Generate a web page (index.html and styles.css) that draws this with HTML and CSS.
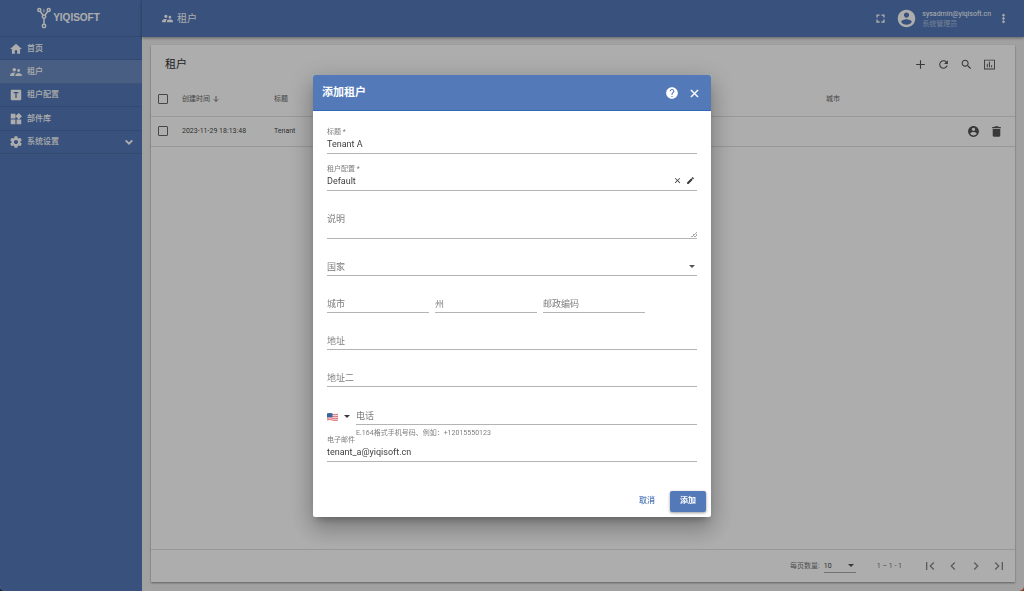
FILE: index.html
```html
<!DOCTYPE html>
<html lang="zh-CN">
<head>
<meta charset="utf-8">
<meta name="viewport" content="width=device-width, initial-scale=1">
<title>租户</title>
<link rel="stylesheet" href="styles.css">
</head>
<body>
<div class="app">
  <aside class="sidebar">
    <div class="brand">
      <svg class="brand-mark" viewBox="0 0 14 22" aria-hidden="true"><g fill="none" stroke="currentColor" stroke-width="1.5"><circle cx="2.3" cy="3" r="1.500"/><circle cx="11.7" cy="3" r="1.500"/><circle cx="7" cy="9.6" r="1.700"/><circle cx="7" cy="19" r="1.700"/><path d="M3.2 4.300 6 8.300M10.800 4.300 8 8.300M7 11.300v6"/><path d="M6.900 2.200v3.200" stroke-width="1"/></g></svg>
      <span>YIQISOFT</span>
    </div>
    <nav class="nav">
      <a href="#home"><svg viewBox="0 0 24 24" aria-hidden="true"><path d="M10 20v-6h4v6h5v-8h3L12 3 2 12h3v8z"/></svg><span>首页</span></a>
      <a href="#tenants" class="active"><svg viewBox="0 0 24 24" aria-hidden="true"><path d="M16.5 12c1.38 0 2.49-1.12 2.49-2.5S17.88 7 16.5 7 14 8.12 14 9.5s1.12 2.5 2.5 2.5zM9 11c1.66 0 2.99-1.34 2.99-3S10.66 5 9 5 6 6.34 6 8s1.34 3 3 3zm7.5 3c-1.83 0-5.5.92-5.5 2.75V19h11v-2.25c0-1.83-3.67-2.75-5.5-2.75zM9 13c-2.33 0-7 1.17-7 3.5V19h7v-2.25c0-.85.33-2.34 2.37-3.47C10.5 13.1 9.66 13 9 13z"/></svg><span>租户</span></a>
      <a href="#profiles"><svg viewBox="0 0 24 24" aria-hidden="true"><path fill-rule="evenodd" d="M5 3h14a2 2 0 0 1 2 2v14a2 2 0 0 1-2 2H5a2 2 0 0 1-2-2V5c0-1.100.9-2 2-2zm3 4v2.200h2.900V17h2.200V9.200H16V7z"/></svg><span>租户配置</span></a>
      <a href="#widgets"><svg viewBox="0 0 24 24" aria-hidden="true"><path d="M13 13v8h8v-8h-8zM3 21h8v-8H3v8zM3 3v8h8V3H3zm13.660-1.310L11 7.340 16.660 13l5.660-5.660-5.660-5.650z"/></svg><span>部件库</span></a>
      <a href="#settings"><svg viewBox="0 0 24 24" aria-hidden="true"><path d="M19.430 12.980c.04-.32.07-.64.07-.98s-.03-.66-.07-.98l2.110-1.650c.19-.15.24-.42.12-.64l-2-3.460c-.12-.22-.39-.3-.61-.22l-2.490 1c-.52-.4-1.080-.73-1.690-.98l-.38-2.650C14.460 2.180 14.250 2 14 2h-4c-.25 0-.46.18-.49.42l-.38 2.650c-.61.25-1.170.59-1.690.98l-2.490-1c-.23-.09-.49 0-.61.22l-2 3.460c-.13.22-.07.49.12.64l2.110 1.650c-.04.32-.07.65-.07.98s.03.66.07.98l-2.110 1.650c-.19.15-.24.42-.12.64l2 3.460c.12.22.39.3.61.22l2.490-1c.52.4 1.080.73 1.690.98l.38 2.650c.03.24.24.42.49.42h4c.25 0 .46-.18.49-.42l.38-2.650c.61-.25 1.170-.59 1.690-.98l2.490 1c.23.09.49 0 .61-.22l2-3.460c.12-.22.07-.49-.12-.64l-2.110-1.650zM12 15.500c-1.930 0-3.500-1.570-3.500-3.500s1.570-3.500 3.500-3.500 3.500 1.570 3.500 3.500-1.570 3.500-3.500 3.500z"/></svg><span>系统设置</span><svg class="chevron" viewBox="0 0 24 24" aria-hidden="true"><path d="m4 8 8 8 8-8" fill="none" stroke="currentColor" stroke-width="4.500"/></svg></a>
    </nav>
  </aside>

  <div class="workspace">
    <header class="topbar">
      <div class="crumb"><svg viewBox="0 0 24 24" aria-hidden="true"><path d="M16.5 12c1.38 0 2.49-1.12 2.49-2.5S17.88 7 16.5 7 14 8.12 14 9.5s1.12 2.5 2.5 2.5zM9 11c1.66 0 2.99-1.34 2.99-3S10.66 5 9 5 6 6.34 6 8s1.34 3 3 3zm7.5 3c-1.83 0-5.5.92-5.5 2.75V19h11v-2.25c0-1.83-3.67-2.75-5.5-2.75zM9 13c-2.33 0-7 1.17-7 3.5V19h7v-2.25c0-.85.33-2.34 2.37-3.47C10.5 13.1 9.66 13 9 13z"/></svg><span>租户</span></div>
      <button class="icon-btn fullscreen" type="button" aria-label="全屏"><svg viewBox="0 0 24 24"><path d="M5 14H3v7h7v-3H6v-4zM3 10h3V6h4V3H3zm15 8h-4v3h7v-7h-3zM14 3v3h4v4h3V3z"/></svg></button>
      <div class="user">
        <svg viewBox="0 0 24 24" aria-hidden="true"><path d="M12 2C6.480 2 2 6.480 2 12s4.480 10 10 10 10-4.480 10-10S17.520 2 12 2zm0 3c1.660 0 3 1.340 3 3s-1.340 3-3 3-3-1.340-3-3 1.340-3 3-3zm0 14.200c-2.500 0-4.710-1.280-6-3.220.03-1.990 4-3.080 6-3.080 1.990 0 5.970 1.090 6 3.080-1.290 1.940-3.500 3.220-6 3.220z"/></svg>
        <div><div>sysadmin@yiqisoft.cn</div><div class="role">系统管理员</div></div>
      </div>
      <button class="icon-btn more" type="button" aria-label="更多"><svg viewBox="0 0 24 24"><path d="M12 8c1.100 0 2-.9 2-2s-.9-2-2-2-2 .9-2 2 .9 2 2 2zm0 2c-1.100 0-2 .9-2 2s.9 2 2 2 2-.9 2-2-.9-2-2-2zm0 6c-1.100 0-2 .9-2 2s.9 2 2 2 2-.9 2-2-.9-2-2-2z" stroke="currentColor"/></svg></button>
    </header>

    <main class="content">
      <section class="card">
        <div class="card-head">
          <h1>租户</h1>
          <button class="icon-btn" type="button" aria-label="添加租户"><svg viewBox="0 0 24 24"><path d="M20 13h-7v7h-2v-7H4v-2h7V4h2v7h7z"/></svg></button>
          <button class="icon-btn" type="button" aria-label="刷新"><svg viewBox="0 0 24 24"><path d="M17.650 6.350C16.200 4.900 14.210 4 12 4c-4.420 0-7.990 3.580-7.990 8s3.570 8 7.990 8c3.730 0 6.840-2.550 7.730-6h-2.080c-.82 2.330-3.040 4-5.650 4-3.310 0-6-2.690-6-6s2.690-6 6-6c1.660 0 3.140.69 4.220 1.780L13 11h7V4l-2.350 2.350z"/></svg></button>
          <button class="icon-btn" type="button" aria-label="搜索"><svg viewBox="0 0 24 24"><path d="M15.500 14h-.79l-.28-.27C15.410 12.590 16 11.110 16 9.500 16 5.910 13.090 3 9.500 3S3 5.910 3 9.500 5.910 16 9.500 16c1.610 0 3.090-.59 4.230-1.570l.27.28v.79l5 4.990L20.490 19l-4.990-5zm-6 0C7.010 14 5 11.990 5 9.500S7.010 5 9.500 5 14 7.010 14 9.500 11.990 14 9.500 14z"/></svg></button>
          <button class="icon-btn" type="button" aria-label="统计"><svg viewBox="0 0 24 24"><path d="M2 3v18h20V3zm18.300 16.300H3.700V4.700h16.600zM7 10.500h1.800V17H7zM11 7h1.800v10H11zm4 6.500h1.800V17H15z"/></svg></button>
        </div>
        <table>
          <colgroup><col class="c-check"><col class="c-time"><col><col class="c-city"><col class="c-actions"></colgroup>
          <thead>
            <tr><th><input type="checkbox" aria-label="全选"></th><th><span class="sort">创建时间 <svg viewBox="0 0 24 24" aria-hidden="true"><path d="M12 3v16M5 12.500l7 7 7-7" fill="none" stroke="currentColor" stroke-width="2.600"/></svg></span></th><th>标题</th><th>城市</th><th></th></tr>
          </thead>
          <tbody>
            <tr><td><input type="checkbox" aria-label="选择 Tenant"></td><td>2023-11-29 18:13:48</td><td>Tenant</td><td></td><td><div class="row-actions">
              <button class="icon-btn" type="button" aria-label="管理租户管理员"><svg viewBox="0 0 24 24"><path d="M12 2C6.480 2 2 6.480 2 12s4.480 10 10 10 10-4.480 10-10S17.520 2 12 2zm0 3c1.660 0 3 1.340 3 3s-1.340 3-3 3-3-1.340-3-3 1.340-3 3-3zm0 14.200c-2.500 0-4.710-1.280-6-3.220.03-1.990 4-3.080 6-3.080 1.990 0 5.970 1.090 6 3.080-1.290 1.940-3.500 3.220-6 3.220z"/></svg></button>
              <button class="icon-btn" type="button" aria-label="删除"><svg viewBox="0 0 24 24"><path d="M5 19.500c0 1.100.9 2 2 2h10c1.100 0 2-.9 2-2V7.500H5zM20 3.500h-4l-1-1H9l-1 1H4v2.300h16z"/></svg></button>
            </div></td></tr>
          </tbody>
        </table>
        <footer class="pager">
          <label for="page-size">每页数量:</label>
          <div class="select page-size"><select id="page-size"><option>10</option></select><svg viewBox="0 0 10 5" aria-hidden="true"><path d="M0 0h10L5 5z"/></svg></div>
          <span class="range">1 – 1 - 1</span>
          <div class="pages">
            <button class="icon-btn" type="button" aria-label="首页"><svg viewBox="0 0 24 24"><path d="M18.400 16.600 13.800 12l4.600-4.600L17 6l-6 6 6 6zM6 6h2v12H6z"/></svg></button>
            <button class="icon-btn" type="button" aria-label="上一页"><svg viewBox="0 0 24 24"><path d="M15.400 7.400 14 6l-6 6 6 6 1.400-1.400L10.800 12z"/></svg></button>
            <button class="icon-btn" type="button" aria-label="下一页"><svg viewBox="0 0 24 24"><path d="M10 6 8.600 7.400l4.600 4.600-4.600 4.600L10 18l6-6z"/></svg></button>
            <button class="icon-btn" type="button" aria-label="末页"><svg viewBox="0 0 24 24"><path d="m5.600 7.400 4.600 4.600-4.600 4.600L7 18l6-6-6-6zM16 6h2v12h-2z"/></svg></button>
          </div>
        </footer>
      </section>
    </main>
  </div>
</div>

<div class="backdrop">
  <form class="dialog" role="dialog" aria-modal="true" aria-labelledby="dialog-title">
    <header class="dialog-head">
      <h2 id="dialog-title">添加租户</h2>
      <button class="icon-btn help" type="button" aria-label="帮助"><svg viewBox="0 0 24 24"><path d="M12 2C6.480 2 2 6.480 2 12s4.480 10 10 10 10-4.480 10-10S17.520 2 12 2zm1 17h-2v-2h2v2zm2.070-7.750-.9.920C13.450 12.900 13 13.500 13 15h-2v-.5c0-1.100.45-2.100 1.170-2.830l1.240-1.260c.37-.36.59-.86.59-1.410 0-1.100-.9-2-2-2s-2 .9-2 2H8c0-2.210 1.790-4 4-4s4 1.790 4 4c0 .88-.36 1.680-.93 2.250z"/></svg></button>
      <button class="icon-btn" type="button" aria-label="关闭"><svg viewBox="0 0 24 24"><path d="M19 6.410 17.590 5 12 10.590 6.410 5 5 6.410 10.590 12 5 17.590 6.410 19 12 13.410 17.590 19 19 17.590 13.410 12z" stroke="currentColor" stroke-width=".8"/></svg></button>
    </header>
    <div class="fields">
      <div class="field filled"><label for="title">标题 *</label><input id="title" type="text" value="Tenant A"></div>
      <div class="field filled"><label for="profile">租户配置 *</label>
        <div class="with-tools"><input id="profile" type="text" value="Default">
          <button class="icon-btn" type="button" aria-label="清除"><svg viewBox="0 0 24 24"><path d="M19 6.410 17.590 5 12 10.590 6.410 5 5 6.410 10.590 12 5 17.590 6.410 19 12 13.410 17.590 19 19 17.590 13.410 12z"/></svg></button>
          <button class="icon-btn" type="button" aria-label="编辑"><svg viewBox="0 0 24 24"><path d="M3 17.250V21h3.750L17.810 9.940l-3.750-3.750L3 17.250zM20.710 7.040c.39-.39.39-1.020 0-1.410l-2.340-2.340c-.39-.39-1.020-.39-1.410 0l-1.830 1.830 3.750 3.750 1.830-1.830z"/></svg></button>
        </div>
      </div>
      <div class="field empty tall"><textarea id="desc" rows="2"></textarea><label for="desc">说明</label></div>
      <div class="field empty select"><select id="country"><option value=""></option></select><label for="country">国家</label><svg viewBox="0 0 10 5" aria-hidden="true"><path d="M0 0h10L5 5z"/></svg></div>
      <div class="split">
        <div class="field empty"><input id="city" type="text"><label for="city">城市</label></div>
        <div class="field empty"><input id="state" type="text"><label for="state">州</label></div>
        <div class="field empty"><input id="zip" type="text"><label for="zip">邮政编码</label></div>
      </div>
      <div class="field empty"><input id="addr1" type="text"><label for="addr1">地址</label></div>
      <div class="field empty"><input id="addr2" type="text"><label for="addr2">地址二</label></div>
      <div class="phone">
        <button class="flag" type="button" aria-label="国家区号：美国">
          <svg class="us" viewBox="0 0 22 16" aria-hidden="true"><path fill="#f4e4e6" d="M0 1q6-2 11 0t11 0v14q-6 2-11 0T0 15z"/><path d="M0 2.500q6-2 11 0t11 0M0 6.500q6-2 11 0t11 0M0 10.500q6-2 11 0t11 0M0 14q6-2 11 0t11 0" fill="none" stroke="#dc6067" stroke-width="1.800"/><path fill="#34659f" d="M0 1q6-2 11 0v8q-5-2-11 0z"/></svg>
          <svg class="caret" viewBox="0 0 10 5" aria-hidden="true"><path d="M0 0h10L5 5z"/></svg>
        </button>
        <div class="phone-main">
          <div class="field empty"><input id="phone" type="tel" aria-describedby="phone-hint"><label for="phone">电话</label></div>
          <div class="hint" id="phone-hint">E.164格式手机号码、例如：+12015550123</div>
        </div>
      </div>
      <div class="field filled compact"><label for="email">电子邮件</label><input id="email" type="email" value="tenant_a@yiqisoft.cn"></div>
    </div>
    <footer class="dialog-actions">
      <button class="btn" type="button">取消</button>
      <button class="btn primary" type="submit">添加</button>
    </footer>
  </form>
</div>
</body>
</html>
```

FILE: styles.css
```css
:root {
  --primary: #5379b9;
  --text: rgba(0, 0, 0, .78);
  --muted: rgba(0, 0, 0, .54);
  --line: rgba(0, 0, 0, .12);
}

* { box-sizing: border-box; }

html { height: 100%; background: linear-gradient(90deg, #26384e 50%, #d4562a 50%); }

body {
  height: 100%;
  margin: 0;
  font: 7px/10px Roboto, "Noto Sans CJK SC", sans-serif;
  color: var(--text);
}

button, input, select, textarea {
  margin: 0;
  padding: 0;
  border: 0;
  background: none;
  font: inherit;
  color: inherit;
  outline: 0;
}

h1, h2 { margin: 0; }
svg { display: block; fill: currentColor; flex: none; }

.app {
  display: flex;
  min-height: 100%;
  border-radius: 0 0 5px 5px;
  overflow: hidden;
  background: #eee;
}

/* Sidebar */
.sidebar {
  flex: 0 0 142px;
  background: var(--primary);
  color: #fff;
}

.brand {
  display: flex;
  align-items: center;
  justify-content: center;
  gap: 2px;
  height: 37px;
  padding-right: 5px;
  border-bottom: 1px solid rgba(0, 0, 0, .1);
  font: bold 10px/12px "Liberation Sans", sans-serif;
}

.brand-mark { width: 14px; height: 22px; }

.nav { display: grid; grid-auto-rows: 1fr; min-height: 117px; }

.nav a {
  display: flex;
  align-items: center;
  gap: 4px;
  padding: 1px 8px 0 9px;
  border-bottom: 1px solid rgba(0, 0, 0, .1);
  color: inherit;
  font-size: 8px;
  font-weight: 500;
  text-decoration: none;
}

.nav a.active { background: rgba(255, 255, 255, .14); }
.nav svg { width: 14px; height: 14px; }
.nav .chevron { width: 10px; height: 10px; margin-left: auto; }

/* Top bar */
.workspace { display: flex; flex: 1; flex-direction: column; min-width: 0; }

.topbar {
  display: flex;
  align-items: center;
  height: 37px;
  padding: 0 8px 0 19px;
  background: var(--primary);
  box-shadow: 0 1px 3px rgba(0, 0, 0, .4);
  color: #fff;
}

.crumb { display: flex; align-items: center; gap: 3px; margin-right: auto; font-size: 10px; }
.crumb svg { width: 13px; height: 13px; }

.icon-btn { display: grid; place-items: center; width: 23px; height: 23px; cursor: pointer; }
.icon-btn svg { width: 13px; height: 13px; }
.icon-btn.fullscreen svg { width: 11px; height: 11px; }
.icon-btn.more { width: 25px; }

.user { display: flex; align-items: center; gap: 5px; margin-left: 4px; }
.user > svg { width: 21px; height: 21px; }
.role { opacity: .5; }

/* Card */
.content { display: flex; flex: 1; padding: 8px 9px 9px; }

.card {
  display: flex;
  flex: 1;
  flex-direction: column;
  min-width: 0;
  background: #fff;
  box-shadow: 0 1px 2px rgba(0, 0, 0, .4);
}

.card-head { display: flex; align-items: center; height: 37px; padding: 2px 14px 0 14px; color: #555; }
.card-head h1 { margin-right: auto; font-size: 11px; font-weight: 400; line-height: 14px; color: #333; }

table { width: 100%; border-collapse: collapse; table-layout: fixed; }
th, td { padding: 0; border-bottom: 1px solid var(--line); font-weight: 400; text-align: left; }
th { height: 34px; color: #666; }
td { height: 30px; }
th:first-child, td:first-child { padding-left: 7px; }
.c-check { width: 31px; }
.c-time { width: 92px; }
.c-city { width: 136px; }
.c-actions { width: 53px; }

input[type="checkbox"] {
  display: block;
  width: 10px;
  height: 10px;
  border: 1px solid #666;
  border-radius: 1px;
  appearance: none;
}

.sort { display: flex; align-items: center; gap: 2px; }
.sort svg { width: 8px; height: 8px; }
.row-actions { display: flex; color: #555; }

.pager {
  display: flex;
  align-items: center;
  height: 33px;
  margin-top: auto;
  padding-right: 5px;
  border-top: 1px solid var(--line);
  justify-content: flex-end;
  color: #777;
}

.select { display: grid; }
.select > * { grid-area: 1 / 1; }
.select select { width: 100%; appearance: none; }
.select > svg { width: 6px; height: 3px; align-self: center; justify-self: end; color: #555; pointer-events: none; }
.page-size { width: 32px; margin: 0 21px 0 4px; border-bottom: 1px solid #aaa; color: #444; }
.page-size select { height: 13px; }
.page-size > svg { margin-right: 2px; }
.pages { display: flex; margin-left: 16px; color: #888; }
.pages svg { width: 16px; height: 16px; }

/* Dialog */
.backdrop {
  position: fixed;
  inset: 0;
  display: grid;
  place-items: center;
  background: rgba(0, 0, 0, .32);
}

.dialog {
  width: 398px;
  max-width: 90vw;
  border-radius: 2px;
  overflow: hidden;
  background: #fff;
  box-shadow: 0 6px 8px -4px rgba(0, 0, 0, .3), 0 13px 21px 2px rgba(0, 0, 0, .16), 0 5px 26px 4px rgba(0, 0, 0, .14);
}

.dialog-head {
  display: flex;
  align-items: center;
  height: 36px;
  padding: 2px 5px 0 9px;
  border-bottom: 1px solid #2f68b5;
  background: var(--primary);
  color: #fff;
}

.dialog-head h2 { margin-right: auto; font-size: 11px; font-weight: 700; line-height: 14px; }
.help svg { width: 14px; height: 14px; }

.fields { padding: 6px 14px 0; font-size: 9px; line-height: 14px; }

.field {
  display: flex;
  flex-direction: column;
  justify-content: flex-end;
  min-height: 37px;
  padding-bottom: 2px;
  border-bottom: 1px solid #b4b4b4;
}

.field input { width: 100%; min-width: 0; height: 14px; }
.field.filled label { font-size: 7px; line-height: 10px; color: var(--muted); }
.field.compact { min-height: 27px; }

.field.empty { display: grid; justify-content: stretch; align-content: end; padding-bottom: 1px; }
.field.empty > * { grid-area: 1 / 1; }
.field.empty label { color: var(--muted); pointer-events: none; }
.field.tall { min-height: 48px; }
.field.tall textarea { width: 100%; height: 25px; resize: vertical; }

.field.tall textarea::-webkit-resizer {
  background:
    linear-gradient(135deg, transparent 80%, #aaa 80% 84%, transparent 84% 90%, #aaa 90% 94%, transparent 94%);
}

.with-tools { display: flex; align-items: center; }
.with-tools .icon-btn { width: 14px; height: 14px; }
.with-tools svg { width: 9px; height: 9px; }
.field.select svg { margin-right: 2px; }

.split { display: flex; gap: 6px; }
.split .field { flex: 0 0 102px; }

.phone { display: flex; gap: 6px; }
.flag { display: flex; align-items: center; gap: 6px; height: 14px; margin-top: 23px; }
.us { width: 11px; height: 8px; }
.caret { width: 6px; height: 3px; }
.phone-main { flex: 1; min-width: 0; }
.phone .field { min-height: 38px; }
.hint { padding-top: 3px; margin-bottom: -3px; font-size: 7px; line-height: 10px; color: var(--muted); }

.dialog-actions { display: flex; justify-content: flex-end; gap: 5px; padding: 29px 5px 5px; }

.btn {
  min-width: 36px;
  height: 21px;
  border-radius: 2px;
  color: var(--primary);
  font-size: 8px;
  font-weight: 500;
  cursor: pointer;
}

.btn.primary {
  background: var(--primary);
  box-shadow: 0 1px 3px rgba(0, 0, 0, .4);
  color: #fff;
  font-weight: 700;
}
```
